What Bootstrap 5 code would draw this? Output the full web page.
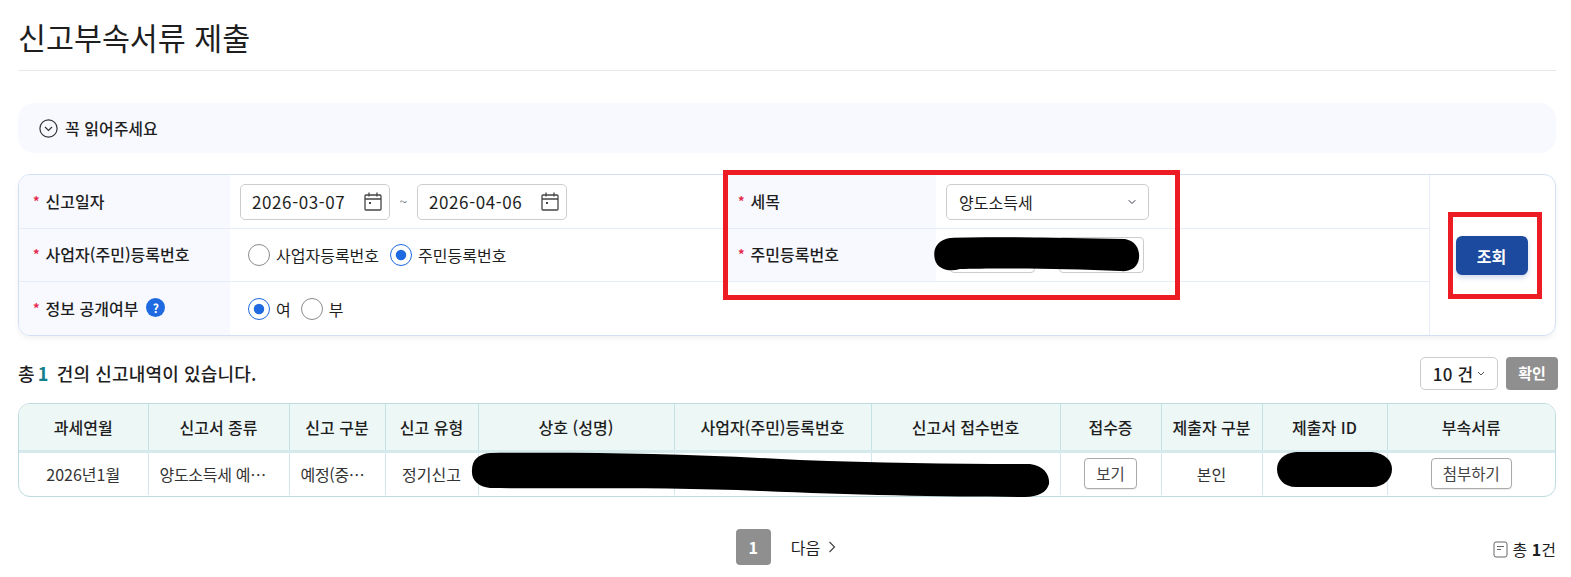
<!DOCTYPE html>
<html lang="ko">
<head>
  <meta charset="UTF-8" />
  <meta name="viewport" content="width=device-width, initial-scale=1" />
  <title>신고부속서류 제출</title>
  <link href="https://cdn.jsdelivr.net/npm/bootstrap@5.3.3/dist/css/bootstrap.min.css" rel="stylesheet" />
  <style>
    body { font-family: "Noto Sans CJK KR", "Noto Sans", sans-serif; color: #1e1e1e; background: #fff; font-size: 16px; }
    .page-wrap { position: relative; padding: 0 15px 0 18px; height: 577px; overflow: hidden; }
    .page-title { font-size: 30.4px; font-weight: 400; line-height: 44px; margin: 0; padding-top: 15px; height: 71px; border-bottom: 1px solid #e8e8e8; }
    .notice-bar { margin-top: 32px; height: 50px; background: #f8f9fe; border-radius: 16px; padding-left: 21px; font-size: 16px; font-weight: 500; gap: 7px; }
    .search-box { margin-top: 21px; height: 162px; border: 1px solid #d3e0f4; border-radius: 12px; overflow: hidden; box-shadow: 0 3px 5px rgba(0,0,0,.05); display: grid; grid-template-columns: 211px 494px 212px 493px 1fr; grid-template-rows: 54px 53px 1fr; }
    .lbl-cell { background: #f7f9ff; padding: 0 0 2px 14px; font-weight: 500; font-size: 16px; border-bottom: 1px solid #e6edf9; }
    .val-cell { padding-left: 10px; border-bottom: 1px solid #e6edf9; gap: 8px; }
    .no-line { border-bottom: 0; }
    .req-mark { color: #e5284a; margin-right: 6px; font-size: 13px; font-weight: 700; }
    .help-dot { width: 19px; height: 19px; border-radius: 50%; background: #1f6ae0; color: #fff; font-size: 12px; font-weight: 700; margin-left: 8px; }
    .date-box { width: 150px; height: 36px; border: 1px solid #ccc; border-radius: 5px; padding: 0 7px 0 11px; font-size: 17px; letter-spacing: .6px; }
    .date-sep { width: 11px; text-align: center; font-size: 14px; }
    .radio-row { padding-left: 18px; gap: 6px; }
    .radio-row .form-check-input { width: 22px; height: 22px; margin: 0; border-color: #8c8c8c; flex: none; background-color: #fff; }
    .radio-row .form-check-input:checked { border-color: #1f6ae0; background-color: #fff; background-image: url("data:image/svg+xml,%3csvg xmlns='http://www.w3.org/2000/svg' viewBox='-4 -4 8 8'%3e%3ccircle r='2.1' fill='%231f6ae0'/%3e%3c/svg%3e"); }
    .radio-row label { margin-right: 5px; font-size: 16px; }
    .tax-select { width: 203px; height: 36px; font-size: 16px; padding: 0 12px; border-color: #ccc; border-radius: 5px; color: #1e1e1e; background-size: 10px 8px; background-position: right 11px center; }
    .id-box { width: 85px; height: 36px; border: 1px solid #ccc; border-radius: 4px; }
    .action-cell { grid-column: 5; grid-row: 1 / 4; border-left: 1px solid #e6edf9; }
    .search-btn { width: 72px; height: 39px; background: #1c4a9e; color: #fff; font-weight: 700; font-size: 16px; border: 0; border-radius: 6px; margin: 1px 2px 0 0; box-shadow: 0 3px 5px rgba(28,74,158,.2); }
    .count-row { height: 67px; padding-top: 8px; margin-right: -2px; font-size: 18px; font-weight: 500; letter-spacing: .15px; }
    .count-num { color: #14808c; font-weight: 700; margin: 0 3px; }
    .size-box { width: 78px; height: 33px; border: 1px solid #ccc; border-radius: 5px; font-size: 17px; gap: 4px; }
    .ok-btn { width: 52px; height: 33px; background: #8f8f8f; color: #fff; border: 0; border-radius: 4px; font-size: 15px; font-weight: 700; padding: 0; }
    .result-wrap { height: 94px; border: 1px solid #bddcdf; border-radius: 12px; overflow: hidden; }
    .result-table { table-layout: fixed; width: 100%; margin: 0; font-size: 16px; border-collapse: collapse; }
    .result-table th { background: #edf7f6; height: 47px; font-weight: 500; text-align: center; vertical-align: middle; padding: 0; border-right: 1px solid #c6e2e4; border-bottom: 3px solid #d6e9ec; color: #1e1e1e; white-space: nowrap; }
    .result-table td { height: 44px; text-align: center; vertical-align: middle; padding: 0; border-right: 1px solid #d3e8ea; border-bottom: 0; color: #333; white-space: nowrap; }
    .result-table td.cut-cell { text-align: left; padding-left: 11px; letter-spacing: -.3px; }
    .result-table tr > :last-child { border-right: 0; }
    .mini-btn { height: 31px; padding: 0 11px; font-size: 15.5px; color: #444; background: #fff; border: 1px solid #aaa; border-radius: 4px; margin-top: -1px; box-shadow: 0 1px 1px rgba(0,0,0,.08); }
    .pager-row { position: relative; margin-top: 31px; height: 37px; gap: 20px; font-size: 16px; padding-right: 2px; }
    .page-cur { width: 35px; height: 36px; background: #8f8f8f; color: #fff; font-weight: 700; border-radius: 4px; }
    .total-note { position: absolute; right: 0; top: 9px; gap: 5px; font-size: 16px; }
    .total-note b { font-weight: 700; }
    .red-frame { position: absolute; border: 5px solid #ed1c24; pointer-events: none; }
    .frame-one { left: 723px; top: 170px; width: 457px; height: 130px; }
    .frame-two { left: 1448px; top: 212px; width: 94px; height: 87px; }
    .scribble { position: absolute; left: 0; top: 0; pointer-events: none; }
  </style>
</head>
<body>
  <div class="page-wrap">
    <h1 class="page-title">신고부속서류 제출</h1>

    <div class="notice-bar d-flex align-items-center">
      <svg width="19" height="19" viewBox="0 0 19 19" fill="none" stroke="#333" stroke-width="1.2"><circle cx="9.5" cy="9.5" r="8.6"/><path d="M6 8l3.5 3.5L13 8"/></svg>
      <span>꼭 읽어주세요</span>
    </div>

    <div class="search-box">
      <div class="lbl-cell d-flex align-items-center"><span class="req-mark">*</span>신고일자</div>
      <div class="val-cell d-flex align-items-center">
        <div class="date-box d-flex align-items-center justify-content-between">2026-03-07
          <svg width="18" height="19" viewBox="0 0 18 19" fill="none" stroke="#444" stroke-width="1.3"><rect x="1" y="3" width="16" height="15" rx="1"/><path d="M1 7h16M5 0.5v4M13 0.5v4" /><rect x="5" y="10" width="2" height="2" fill="#444" stroke="none"/></svg>
        </div>
        <span class="date-sep text-secondary">~</span>
        <div class="date-box d-flex align-items-center justify-content-between">2026-04-06
          <svg width="18" height="19" viewBox="0 0 18 19" fill="none" stroke="#444" stroke-width="1.3"><rect x="1" y="3" width="16" height="15" rx="1"/><path d="M1 7h16M5 0.5v4M13 0.5v4" /><rect x="5" y="10" width="2" height="2" fill="#444" stroke="none"/></svg>
        </div>
      </div>
      <div class="lbl-cell d-flex align-items-center"><span class="req-mark">*</span>세목</div>
      <div class="val-cell d-flex align-items-center">
        <select class="form-select tax-select"><option>양도소득세</option></select>
      </div>
      <div class="action-cell d-flex align-items-center justify-content-center">
        <button type="button" class="search-btn">조회</button>
      </div>

      <div class="lbl-cell d-flex align-items-center"><span class="req-mark">*</span>사업자(주민)등록번호</div>
      <div class="val-cell radio-row d-flex align-items-center">
        <input class="form-check-input" type="radio" name="idType" id="idBiz" />
        <label for="idBiz">사업자등록번호</label>
        <input class="form-check-input" type="radio" name="idType" id="idRes" checked />
        <label for="idRes">주민등록번호</label>
      </div>
      <div class="lbl-cell d-flex align-items-center"><span class="req-mark">*</span>주민등록번호</div>
      <div class="val-cell d-flex align-items-center gap-4">
        <div class="id-box ms-1"></div>
        <div class="id-box"></div>
      </div>

      <div class="lbl-cell no-line d-flex align-items-center"><span class="req-mark">*</span>정보 공개여부<span class="help-dot d-inline-flex align-items-center justify-content-center">?</span></div>
      <div class="val-cell no-line radio-row d-flex align-items-center">
        <input class="form-check-input" type="radio" name="openYn" id="openY" checked />
        <label class="me-1" for="openY">여</label>
        <input class="form-check-input" type="radio" name="openYn" id="openN" />
        <label for="openN">부</label>
      </div>
      <div></div>
      <div></div>
    </div>

    <div class="count-row d-flex align-items-center justify-content-between">
      <div>총<span class="count-num">1</span> 건의 신고내역이 있습니다.</div>
      <div class="d-flex align-items-center gap-2">
        <div class="size-box d-flex align-items-center justify-content-center">10 건
          <svg width="8" height="6" viewBox="0 0 8 6" fill="none" stroke="#555" stroke-width="1"><path d="M1 1l3 3 3-3"/></svg>
        </div>
        <button type="button" class="ok-btn">확인</button>
      </div>
    </div>

    <div class="result-wrap">
      <table class="result-table">
        <colgroup>
          <col style="width:129px"><col style="width:141px"><col style="width:96px"><col style="width:93px"><col style="width:196px"><col style="width:197px"><col style="width:189px"><col style="width:101px"><col style="width:101px"><col style="width:125px"><col>
        </colgroup>
        <thead>
          <tr>
            <th>과세연월</th><th>신고서 종류</th><th>신고 구분</th><th>신고 유형</th><th>상호 (성명)</th><th>사업자(주민)등록번호</th><th>신고서 접수번호</th><th>접수증</th><th>제출자 구분</th><th>제출자 ID</th><th>부속서류</th>
          </tr>
        </thead>
        <tbody>
          <tr>
            <td>2026년1월</td>
            <td class="cut-cell">양도소득세 예…</td>
            <td class="cut-cell">예정(중…</td>
            <td>정기신고</td>
            <td></td>
            <td></td>
            <td></td>
            <td><button type="button" class="mini-btn">보기</button></td>
            <td>본인</td>
            <td></td>
            <td><button type="button" class="mini-btn">첨부하기</button></td>
          </tr>
        </tbody>
      </table>
    </div>

    <div class="pager-row d-flex align-items-center justify-content-center">
      <span class="page-cur d-flex align-items-center justify-content-center">1</span>
      <span class="d-flex align-items-center gap-2">다음
        <svg width="8" height="12" viewBox="0 0 8 12" fill="none" stroke="#444" stroke-width="1.2"><path d="M1.5 1l5 5-5 5"/></svg>
      </span>
      <div class="total-note d-flex align-items-center">
        <svg width="15" height="17" viewBox="0 0 15 17" fill="none" stroke="#666" stroke-width="1"><rect x="1" y="1" width="13" height="15" rx="2"/><path d="M4 5.5h7M4 8.5h4"/></svg>
        <span>총 <b>1</b>건</span>
      </div>
    </div>

    <!-- 스크린샷의 가림 표시와 빨간 강조 박스 -->
    <svg class="scribble" width="1571" height="577" viewBox="0 0 1571 577">
      <path d="M950 238C1000 236 1060 238 1125 239C1136 241 1140 250 1139 258C1138 268 1130 272 1120 271C1060 268 990 268 960 269C950 272 938 270 935 260C932 248 938 240 950 238Z" fill="#000"/>
      <path d="M490 453C600 452 690 454 800 460C880 463 960 464 1030 464C1045 466 1050 476 1049 484C1047 492 1038 497 1025 497C950 497 850 495 760 491C670 487 570 489 490 488C478 487 471 480 472 470C472 460 478 454 490 453Z" fill="#000"/>
      <path d="M1296 452H1372C1385 453 1392 461 1392 469C1392 479 1384 487 1372 487H1296C1284 487 1277 479 1277 469C1277 460 1284 453 1296 452Z" fill="#000"/>
    </svg>
    <div class="red-frame frame-one"></div>
    <div class="red-frame frame-two"></div>
  </div>

  <script src="https://cdn.jsdelivr.net/npm/bootstrap@5.3.3/dist/js/bootstrap.bundle.min.js"></script>
</body>
</html>
